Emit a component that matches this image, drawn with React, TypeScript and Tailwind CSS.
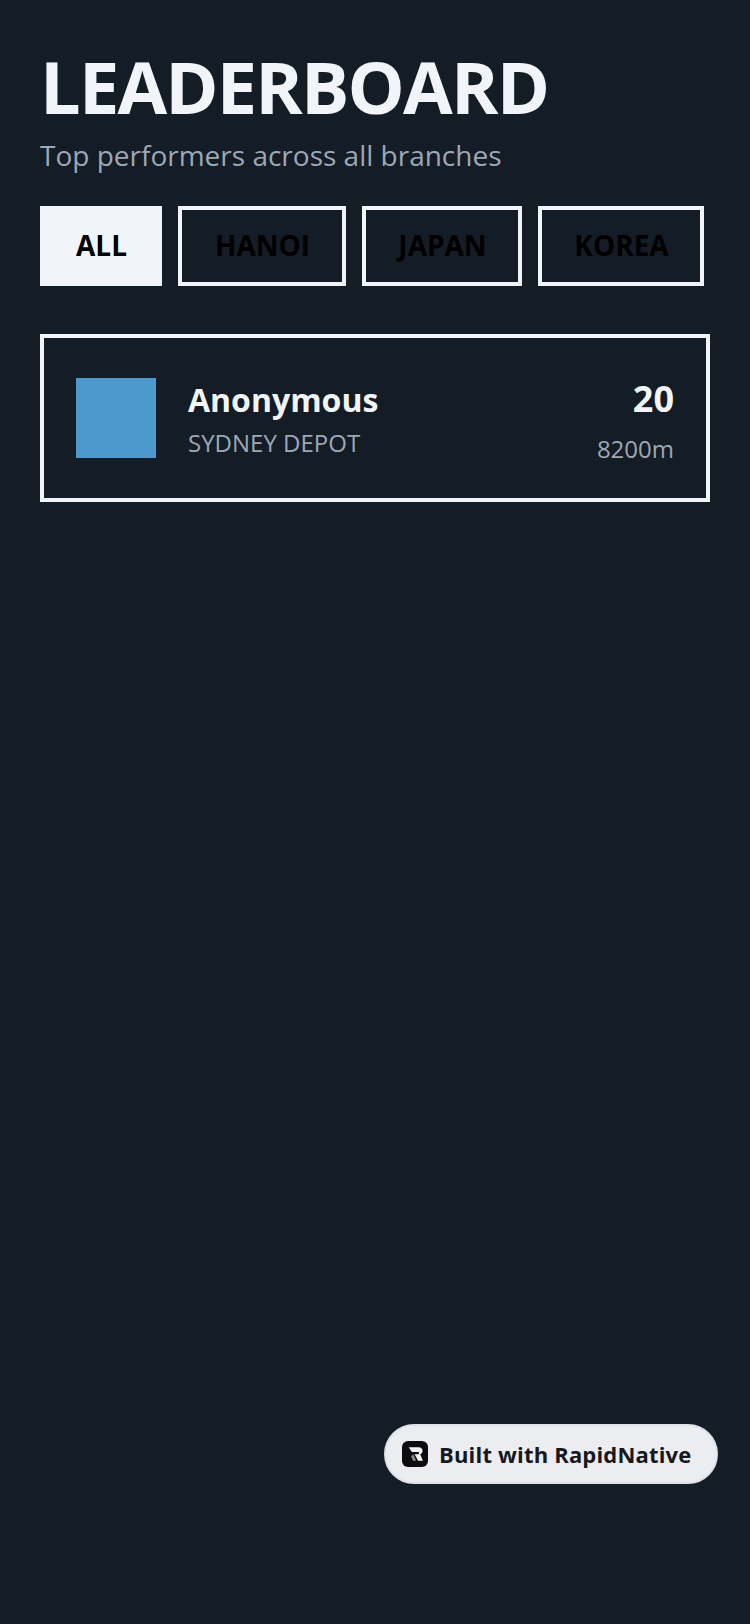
const filters = [
  { label: 'ALL', width: 'w-[122px]', active: true },
  { label: 'HANOI', width: 'w-[168px]', active: false },
  { label: 'JAPAN', width: 'w-[160px]', active: false },
  { label: 'KOREA', width: 'w-[166px]', active: false },
]

export default function App() {
  return (
    <div className="relative h-[1624px] w-[750px] overflow-hidden bg-[#141c26] px-10 pt-[38px] font-['Open_Sans',sans-serif]">
      <h1 className="text-[72px] leading-[96px] font-bold tracking-[-1.8px] text-[#f1f5f9]">LEADERBOARD</h1>
      <p className="mt-[1px] text-[28px] leading-[40px] text-[#9ca8b5]">Top performers across all branches</p>

      <div className="mt-[31px] flex gap-4">
        {filters.map((f) => (
          <div
            key={f.label}
            className={`border-4 border-[#f1f5f9] pt-[15px] pb-[17px] pl-[1px] text-center text-[28px] leading-[40px] font-bold text-black ${f.width} ${f.active ? 'bg-[#f1f5f9]' : ''}`}
          >
            {f.label}
          </div>
        ))}
      </div>

      <div className="mt-12 flex h-[168px] w-[670px] items-center border-4 border-[#f1f5f9] px-8">
        <div className="h-20 w-20 shrink-0 bg-[#4c99cd]" />
        <div className="ml-8 flex-1 pt-[2px]">
          <div className="text-[32px] leading-[44px] font-bold text-[#f1f5f9]">Anonymous</div>
          <div className="mt-[3px] text-[24px] leading-[36px] text-[#9ca8b5]">SYDNEY DEPOT</div>
        </div>
        <div className="pt-[6px] text-right">
          <div className="text-[36px] leading-[48px] font-bold text-[#f1f5f9]">20</div>
          <div className="mt-2 text-[24px] leading-[36px] text-[#9ca8b5]">8200m</div>
        </div>
      </div>

      <div className="absolute top-[1424px] left-[384px] flex h-[60px] w-[334px] items-center gap-[11px] rounded-full border-2 border-[#dfe2e6] bg-[#ecedf0] pl-[16px]">
        <div className="flex h-[26px] w-[26px] items-center justify-center rounded-[6px] bg-[#0d0d0f]">
          <svg width="18" height="18" viewBox="0 0 16 16" fill="none">
            <path d="M2.500 2h8.700c2.300 0 3.500 1.300 3.500 3.200 0 1.500-.8 2.600-2.100 3L15 14h-4.200L7.600 8.300h2.900c.7 0 1.100-.4 1.100-1 0-.7-.4-1.100-1.100-1.100H5.200z" fill="#f5f5f5" />
            <path d="M6.500 8.300 9 14H6.200L4.500 10z" fill="#8a8a8a" />
          </svg>
        </div>
        <span className="text-[22px] leading-[32px] font-bold tracking-[0.18px] text-[#16181d]">Built with RapidNative</span>
      </div>
    </div>
  )
}
